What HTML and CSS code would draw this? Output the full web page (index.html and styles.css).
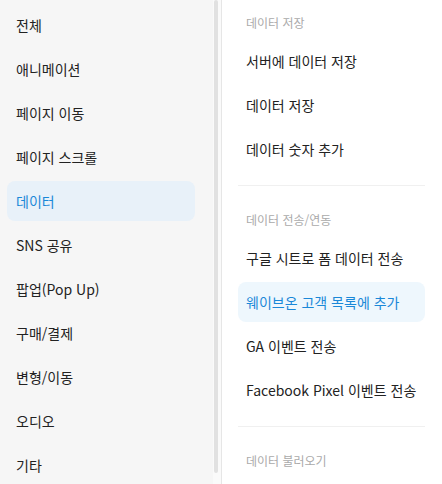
FILE: index.html
```html
<!DOCTYPE html>
<html lang="ko">
<head>
    <meta charset="UTF-8">
    <meta name="viewport" content="width=device-width, initial-scale=1.0">
    <title>데이터</title>
    <link rel="stylesheet" href="styles.css">
</head>
<body>
    <div class="wrap">
        <!-- 왼쪽 카테고리 -->
        <div class="side">
            <ul class="cate">
                <li>전체</li>
                <li>애니메이션</li>
                <li>페이지 이동</li>
                <li>페이지 스크롤</li>
                <li class="on">데이터</li>
                <li>SNS 공유</li>
                <li>팝업(Pop Up)</li>
                <li>구매/결제</li>
                <li>변형/이동</li>
                <li>오디오</li>
                <li>기타</li>
            </ul>
            <div class="scroll"><div class="thumb"></div></div>
        </div>

        <!-- 오른쪽 액션 목록 -->
        <div class="main">
            <div class="group">
                <div class="group_title">데이터 저장</div>
                <ul class="act">
                    <li>서버에 데이터 저장</li>
                    <li>데이터 저장</li>
                    <li>데이터 숫자 추가</li>
                </ul>
            </div>
            <div class="group">
                <div class="group_title">데이터 전송/연동</div>
                <ul class="act">
                    <li>구글 시트로 폼 데이터 전송</li>
                    <li class="on">웨이브온 고객 목록에 추가</li>
                    <li>GA 이벤트 전송</li>
                    <li>Facebook Pixel 이벤트 전송</li>
                </ul>
            </div>
            <div class="group">
                <div class="group_title">데이터 불러오기</div>
            </div>
        </div>
    </div>
</body>
</html>
```

FILE: styles.css
```css
* {
    box-sizing: border-box;
}
body {
    margin: 0;
    font-family: "Noto Sans CJK KR", "Noto Sans", sans-serif;
    color: #222;
    overflow: hidden;
}
ul {
    list-style: none;
    margin: 0;
    padding: 0;
}
div.wrap {
    display: flex;
    height: 100vh;
}

/* 왼쪽 */
div.side {
    display: flex;
    align-items: flex-start;
    width: 222px;
    flex-shrink: 0;
    height: 100%;
    overflow: hidden;
    background-color: #f6f6f6;
    border-right: 1px solid #e6e6e6;
}
ul.cate {
    flex: 1;
    display: flex;
    flex-direction: column;
    gap: 4px;
    padding: 5px 18px 10px 7px;
}
ul.cate li {
    height: 40px;
    line-height: 40px;
    padding-left: 9px;
    font-size: 14px;
    border-radius: 8px;
}
ul.cate li.on {
    background-color: #e8f1f9;
    color: #1a88d8;
}
div.scroll {
    width: 8px;
    height: 100vh;
    padding-left: 1px;
    background-color: #fafafa;
}
div.thumb {
    width: 4px;
    height: calc(100% - 11px);
    border-radius: 2px;
    background-color: #e1e1e1;
}

/* 오른쪽 */
div.main {
    flex: 1;
    height: 100%;
    overflow: hidden;
    padding: 0 17px 0 16px;
    background-color: white;
}
div.group {
    padding: 23px 0 16px;
    border-bottom: 1px solid #f0f0f0;
}
div.group:first-child {
    padding-top: 12px;
}
div.group:last-child {
    border-bottom: none;
}
div.group_title {
    line-height: 22px;
    padding-left: 8px;
    font-size: 12px;
    color: #aaa;
}
ul.act {
    display: flex;
    flex-direction: column;
    gap: 4px;
    padding-top: 7px;
}
ul.act li {
    height: 40px;
    line-height: 40px;
    padding-left: 8px;
    font-size: 14px;
    border-radius: 8px;
}
ul.act li.on {
    background-color: #eef7fd;
    color: #1a88d8;
}
```
